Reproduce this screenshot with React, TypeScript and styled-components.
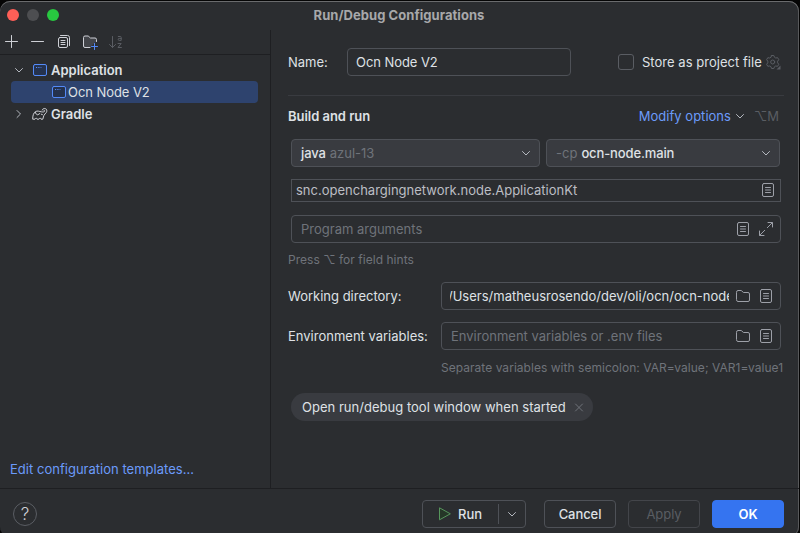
import React from "react";
import styled, { createGlobalStyle, css } from "styled-components";

const c = {
  bg: "#2b2d30",
  line: "#1e1f22",
  border: "#4e5157",
  text: "#dfe1e5",
  muted: "#6f737a",
  icon: "#ced0d6",
  link: "#6b9bfa",
  blue: "#548af7",
};

const GlobalStyle = createGlobalStyle`
  * { box-sizing: border-box; }
  html, body { margin: 0; padding: 0; background: #000; overflow: hidden; }
  body { font-family: Inter, "Liberation Sans", sans-serif; font-size: 13px; line-height: 16px; color: ${c.text}; }
  button { font: inherit; color: inherit; background: none; border: 0; padding: 0; }
`;

const Screen = styled.div`
  width: 800px;
  height: 533px;
  padding-top: 1px;
  overflow: hidden;
  background: #050505;
`;

const Dialog = styled.div`
  width: 799px;
  height: 536px;
  display: flex;
  flex-direction: column;
  background: ${c.bg};
  border-radius: 10px;
  box-shadow: inset 0 1px 0 #6a6b6d, inset -1px 0 0 #58595b;
`;

const TitleBar = styled.header`
  height: 29px;
  flex: none;
  display: grid;
  grid-template-columns: 1fr auto 1fr;
  align-items: center;
  padding-left: 7px;
`;

const Lights = styled.div`
  display: flex;
  gap: 8px;
  padding-bottom: 1px;
`;

const Light = styled.span<{ $color: string }>`
  width: 12px;
  height: 12px;
  border-radius: 50%;
  background: ${(p) => p.$color};
`;

const Title = styled.h1`
  margin: 0;
  font-size: 13px;
  font-weight: 700;
  letter-spacing: 0.05px;
  color: #a7a8aa;
  padding-right: 8px;
  padding-bottom: 2px;
`;

const Body = styled.div`
  display: flex;
  height: 458px;
  flex: none;
`;

const Sidebar = styled.aside`
  width: 271px;
  flex: none;
  display: flex;
  flex-direction: column;
  border-right: 1px solid ${c.line};
`;

const Toolbar = styled.div`
  height: 25px;
  flex: none;
  display: flex;
  gap: 10px;
  padding: 4px 0 0 4px;
  border-bottom: 1px solid ${c.line};
`;

const Glyph = styled.svg`
  width: 16px;
  height: 16px;
  flex: none;
  display: block;
  fill: none;
  stroke: ${c.icon};
  stroke-linecap: round;
  stroke-linejoin: round;
`;

const Tree = styled.div`
  flex: 1;
  padding: 4px 12px 0 11px;
`;

const TreeRow = styled.div<{ $selected?: boolean; $child?: boolean }>`
  height: 22px;
  display: flex;
  align-items: center;
  border-radius: 4px;
  padding-left: ${(p) => (p.$child ? "40px" : "0")};
  font-weight: ${(p) => (p.$child ? 400 : 640)};
  background: ${(p) => (p.$selected ? "#2e436e" : "transparent")};
`;

const TreeArrow = styled.span`
  width: 21px;
  flex: none;
`;

const TreeLabel = styled.span<{ $child?: boolean }>`
  padding-left: ${(p) => (p.$child ? 1 : 3)}px;
  letter-spacing: ${(p) => (p.$child ? "-0.06px" : "0")};
`;

const Link = styled.a<{ $inset?: boolean }>`
  color: ${c.link};
  letter-spacing: 0.02px;
  ${(p) => p.$inset && css`padding: 0 0 11px 10px;`}
`;

const Form = styled.main`
  flex: 1;
  min-width: 0;
  display: flex;
  flex-direction: column;
  padding: 18px 15px 0 17px;
`;

const NameRow = styled.div`
  display: flex;
  align-items: center;
  height: 28px;
`;

const Label = styled.label<{ $width: number }>`
  width: ${(p) => p.$width}px;
  flex: none;
  white-space: nowrap;
`;

const Field = styled.div<{ $width?: number; $compact?: boolean }>`
  height: ${(p) => (p.$compact ? 23 : 28)}px;
  ${(p) => (p.$width ? css`width: ${p.$width}px;` : css`flex: 1;`)}
  min-width: 0;
  display: flex;
  align-items: center;
  gap: 7px;
  padding: ${(p) => (p.$compact ? "0 4px 1px 4px" : "0 6px 0 9px")};
  border: 1px solid ${c.border};
  border-radius: ${(p) => (p.$compact ? 0 : 4)}px;
`;

const Value = styled.span<{ $tone?: string }>`
  flex: 1;
  min-width: 0;
  overflow: hidden;
  white-space: nowrap;
  color: ${(p) => p.$tone ?? c.text};
`;

const NameValue = styled(Value)`
  margin: 0 0 1px -1px;
  letter-spacing: -0.06px;
`;

const PathValue = styled(Value)`
  display: flex;
  margin: 0 -1px 1px -1px;
  span { margin-left: -2px; }
`;

const Checkbox = styled.span`
  width: 16px;
  height: 16px;
  margin: 0 8px 0 47px;
  border: 1px solid #5a5d63;
  border-radius: 3px;
`;

const StoreLabel = styled.span`
  margin-right: 3px;
  letter-spacing: 0.03px;
`;

const Rule = styled.hr`
  width: 496px;
  height: 1px;
  margin: 19px 0 12px;
  border: 0;
  background: #393b40;
  flex: none;
`;

const SectionHead = styled.div`
  display: flex;
  align-items: center;
  height: 16px;
  padding-right: 5px;
`;

const SectionTitle = styled.h2`
  flex: 1;
  margin: 0;
  font-size: 13px;
  font-weight: 640;
  letter-spacing: -0.04px;
`;

const SectionChevron = styled.span`
  margin-left: 1px;
`;

const Shortcut = styled.span`
  color: #5a5d63;
  margin-left: 6px;
`;

const Wide = styled.div<{ $top: number }>`
  display: flex;
  gap: 6px;
  margin: ${(p) => p.$top}px 3px 0;
  flex: none;
`;

const Select = styled.div<{ $width: number }>`
  width: ${(p) => p.$width}px;
  flex: none;
  height: 28px;
  display: flex;
  align-items: center;
  gap: 4px;
  padding: 0 5px 0 9px;
  border: 1px solid ${c.border};
  border-radius: 4px;
  background: #393b40;
  > :last-child { margin-left: auto; }
`;

const Strong = styled.span`
  font-weight: 500;
  letter-spacing: -0.12px;
`;

const Faint = styled.span`
  color: ${c.muted};
`;

const Hint = styled.p<{ $top: number; $left?: number }>`
  margin: ${(p) => p.$top}px 0 0 ${(p) => p.$left ?? 0}px;
  font-size: 12px;
  line-height: 16px;
  letter-spacing: 0.035px;
  white-space: nowrap;
  color: ${c.muted};
`;

const LabeledRow = styled.div<{ $top: number }>`
  display: flex;
  align-items: center;
  margin: ${(p) => p.$top}px 3px 0 0;
`;

const Chip = styled.div`
  align-self: flex-start;
  display: flex;
  align-items: center;
  gap: 5px;
  height: 28px;
  margin: 17px 0 0 3px;
  padding: 0 6px 0 11px;
  letter-spacing: 0.02px;
  border-radius: 14px;
  background: #393b40;
`;

const Footer = styled.footer`
  height: 48px;
  flex: none;
  display: flex;
  align-items: flex-start;
  gap: 12px;
  padding: 11px 15px 0 13px;
  border-top: 1px solid ${c.line};
`;

const Help = styled.button`
  width: 24px;
  height: 24px;
  margin: 2px auto 0 0;
  border: 1px solid #5a5d63;
  border-radius: 50%;
  font-size: 17px;
  font-weight: 300;
  color: ${c.icon};
`;

const Button = styled.button<{ $kind?: "primary" | "disabled" }>`
  width: 72px;
  height: 28px;
  border: 1px solid ${c.border};
  border-radius: 4px;
  font-weight: 500;
  letter-spacing: -0.08px;
  ${(p) => p.$kind === "primary" && css`background: #3574f0; border-color: #3574f0; color: #fff; font-weight: 600;`}
  ${(p) => p.$kind === "disabled" && css`border-color: #43454a; color: #5a5d63; font-weight: 400;`}
`;

const SplitButton = styled.div`
  width: 104px;
  height: 28px;
  margin-right: 6px;
  display: flex;
  align-items: center;
  border: 1px solid ${c.border};
  border-radius: 4px;
  font-weight: 500;
`;

const SplitMain = styled.button`
  flex: 1;
  display: flex;
  align-items: center;
  gap: 6px;
  padding-left: 13px;
`;

const SplitMore = styled.button`
  height: 20px;
  width: 27px;
  padding-left: 5px;
  border-left: 1px solid ${c.border};
`;

const Chevron = ({ right = false }: { right?: boolean }) => (
  <Glyph viewBox="0 0 16 16">
    <path d={right ? "M6 4.5 9.5 8 6 11.5" : "M4.5 6.5 8 10l3.5-3.5"} stroke="#b4b8bf" />
  </Glyph>
);

const DocIcon = () => (
  <Glyph viewBox="0 0 16 16">
    <rect x="2.5" y="1.5" width="11" height="13" rx="1.5" stroke="#9da0a8" />
    <path d="M5.5 5.5h5M5.5 8h5M5.5 10.5h5" stroke="#9da0a8" />
  </Glyph>
);

const FolderIcon = () => (
  <Glyph viewBox="0 0 16 16">
    <path d="M1.5 4A1.5 1.5 0 0 1 3 2.5h3.2L8.5 4.5H13A1.5 1.5 0 0 1 14.5 6v6a1.5 1.5 0 0 1-1.5 1.5H3A1.5 1.5 0 0 1 1.5 12z" stroke="#9da0a8" />
  </Glyph>
);

const ExpandIcon = () => (
  <Glyph viewBox="0 0 16 16">
    <path d="M10 1.5h4.5V6M14.2 1.8 9.3 6.7M1.5 10v4.5H6M1.8 14.2l4.9-4.9" stroke="#9da0a8" />
  </Glyph>
);

const AppIcon = () => (
  <Glyph viewBox="0 0 16 16">
    <rect x="1.5" y="2.5" width="13" height="11" rx="1.5" fill="#25324d" stroke={c.blue} />
    <path d="M4 5.5h1.2M6.3 5.5h1.2M8.6 5.5h.8" stroke={c.blue} strokeLinecap="butt" />
  </Glyph>
);

const GradleIcon = () => (
  <Glyph viewBox="0 0 16 16">
    <path
      d="M10.2 4C10.6 2.7 12 2.2 13.3 2.6c1.6.5 2 2.400 1 3.900-.8 1.200-2 1.700-2.500 3.200l-1 3.500H9c0-1.300-1.700-1.300-2.100 0H5.100c0-1.300-1.700-1.300-2.100 0H.7C.6 10 1.400 7 3.500 5.600c1.900-1.200 3.900-.1 5.800.2 1.100.2 2.500.4 3.200-.4.500-.6.100-1.300-.6-1.300M3.300 6.200c.4 1.500 1.200 2.500 2.500 2.600l2-1.300M9.300 8.200l1.100.4"
      stroke={c.icon}
    />
  </Glyph>
);

const App = () => (
  <Screen>
    <GlobalStyle />
    <Dialog>
      <TitleBar>
        <Lights>
          <Light $color="#ff5f57" />
          <Light $color="#4d4e51" />
          <Light $color="#28c840" />
        </Lights>
        <Title>Run/Debug Configurations</Title>
      </TitleBar>
      <Body>
        <Sidebar>
          <Toolbar>
            <Glyph viewBox="0 0 16 16"><path d="M7.5 1.5v12M1.5 7.5h12" /></Glyph>
            <Glyph viewBox="0 0 16 16"><path d="M1.5 7.5h12" /></Glyph>
            <Glyph viewBox="0 0 16 16">
              <path d="M4.5 1.5h7a2 2 0 0 1 2 2v8" />
              <rect x="2.5" y="3.5" width="9" height="10" rx="1.5" />
              <path d="M5 6.5h4M5 8.5h4M5 10.500h4" />
            </Glyph>
            <Glyph viewBox="0 0 16 16">
              <path d="M8 13.500H3A1.500 1.500 0 0 1 1.500 12V3.500A1.500 1.500 0 0 1 3 2h3.200L8.500 4H13A1.500 1.500 0 0 1 14.500 5.500V7.500L12.500 9z" fill="#43454a" stroke="none" />
              <path d="M8 13.500H3A1.500 1.500 0 0 1 1.500 12V3.500A1.500 1.500 0 0 1 3 2h3.200L8.500 4H13A1.500 1.500 0 0 1 14.500 5.500V7.500" />
              <path d="M12.500 9.500v6M9.500 12.500h6" stroke={c.blue} />
            </Glyph>
            <Glyph viewBox="0 0 16 16">
              <path d="M4.5 2.5v11M1.5 10.5l3 3 3-3" stroke="#5a5d63" />
              <path d="M10.3 2.500h2a.9.9 0 0 1 .9.900v3h-2a1 1 0 0 1 0-2h2M10 9.500h3.200l-3.200 4h3.400" stroke="#5a5d63" />
            </Glyph>
          </Toolbar>
          <Tree>
            <TreeRow>
              <TreeArrow><Chevron /></TreeArrow>
              <AppIcon />
              <TreeLabel>Application</TreeLabel>
            </TreeRow>
            <TreeRow $selected $child>
              <AppIcon />
              <TreeLabel $child>Ocn Node V2</TreeLabel>
            </TreeRow>
            <TreeRow>
              <TreeArrow><Chevron right /></TreeArrow>
              <GradleIcon />
              <TreeLabel>Gradle</TreeLabel>
            </TreeRow>
          </Tree>
          <Link $inset>Edit configuration templates...</Link>
        </Sidebar>
        <Form>
          <NameRow>
            <Label $width={59}>Name:</Label>
            <Field $width={224}><NameValue>Ocn Node V2</NameValue></Field>
            <Checkbox />
            <StoreLabel>Store as project file</StoreLabel>
            <Glyph viewBox="0 0 16 16">
              <path d="M6.6 1.5h2.2l.7 1.800 1.200.7 1.900-.3 1.200 2-1.200 1.500v1.600l1.200 1.500-1.200 2-1.900-.3-1.200.7-.7 1.800H6.600l-.7-1.800-1.200-.7-1.900.3-1.200-2 1.200-1.500V7.200L1.600 5.700l1.200-2 1.900.3 1.200-.7z" stroke="#5a5d63" />
              <circle cx="7.7" cy="8" r="2" stroke="#5a5d63" />
              <path d="M15.5 11.500v4h-4z" fill="#5a5d63" stroke="none" />
            </Glyph>
          </NameRow>
          <Rule />
          <SectionHead>
            <SectionTitle>Build and run</SectionTitle>
            <Link>Modify options</Link>
            <SectionChevron><Chevron /></SectionChevron>
            <Shortcut>⌥M</Shortcut>
          </SectionHead>
          <Wide $top={15}>
            <Select $width={249}>
              <Strong>java</Strong>
              <Faint>azul-13</Faint>
              <Chevron />
            </Select>
            <Select $width={234}>
              <Faint>-cp</Faint>
              <Strong>ocn-node.main</Strong>
              <Chevron />
            </Select>
          </Wide>
          <Wide $top={12}>
            <Field $compact>
              <Value $tone="#bcbec4">snc.openchargingnetwork.node.ApplicationKt</Value>
              <DocIcon />
            </Field>
          </Wide>
          <Wide $top={13}>
            <Field>
              <Value $tone={c.muted}>Program arguments</Value>
              <DocIcon />
              <ExpandIcon />
            </Field>
          </Wide>
          <Hint $top={9}>Press ⌥ for field hints</Hint>
          <LabeledRow $top={14}>
            <Label $width={153}>Working directory:</Label>
            <Field>
              <PathValue><span>/Users/matheusrosendo/dev/oli/ocn/ocn-node</span></PathValue>
              <FolderIcon />
              <DocIcon />
            </Field>
          </LabeledRow>
          <LabeledRow $top={12}>
            <Label $width={153}>Environment variables:</Label>
            <Field>
              <Value $tone={c.muted}>Environment variables or .env files</Value>
              <FolderIcon />
              <DocIcon />
            </Field>
          </LabeledRow>
          <Hint $top={10} $left={153}>Separate variables with semicolon: VAR=value; VAR1=value1</Hint>
          <Chip>
            <span>Open run/debug tool window when started</span>
            <Glyph viewBox="0 0 16 16"><path d="m4.5 5 7 7M11.5 5l-7 7" stroke="#6f737a" /></Glyph>
          </Chip>
        </Form>
      </Body>
      <Footer>
        <Help>?</Help>
        <SplitButton>
          <SplitMain>
            <Glyph viewBox="0 0 16 16"><path d="M3.5 2.200v11.600L14 8z" fill="#253627" stroke="#57965c" /></Glyph>
            Run
          </SplitMain>
          <SplitMore><Chevron /></SplitMore>
        </SplitButton>
        <Button>Cancel</Button>
        <Button $kind="disabled">Apply</Button>
        <Button $kind="primary">OK</Button>
      </Footer>
    </Dialog>
  </Screen>
);

export default App;
